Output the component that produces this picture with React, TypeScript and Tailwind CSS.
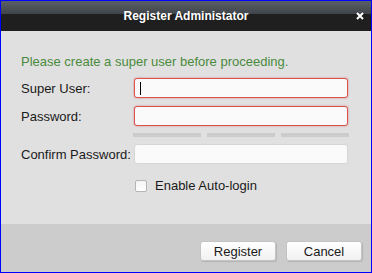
import React from 'react';

const font = { fontFamily: '"Liberation Sans", Arial, sans-serif' };

const Field: React.FC<{ label: string; error?: boolean; caret?: boolean }> = ({ label, error, caret }) => (
  <div className="flex items-center h-[20px]">
    <span className="w-[113px] text-[13px] text-[#1a1a1a] leading-none">{label}</span>
    <div
      className={
        'relative w-[214px] h-[20px] rounded-[3px] bg-[#fafafa] border ' +
        (error ? 'border-[#d9534f] shadow-[0_0_2px_rgba(217,83,79,0.7)]' : 'border-[#d6d6d6]')
      }
    >
      {caret && <span className="absolute left-[5px] top-[3px] w-px h-[13px] bg-black" />}
    </div>
  </div>
);

export default function App() {
  return (
    <div style={font} className="w-[372px] h-[273px] border border-[#0000ff] flex flex-col bg-[#e0e0e0]">
      {/* title bar */}
      <div className="relative h-[30px] flex items-center justify-center bg-[linear-gradient(#5a6067,#3e4349_45%,#1f1f1f_45%)]">
        <span className="text-white text-[12px] font-bold">Register Administator</span>
        <svg className="absolute right-[7px] top-[11px]" width="8" height="8" viewBox="0 0 8 8">
          <path d="M1 1L7 7M7 1L1 7" stroke="#fff" strokeWidth="2" />
        </svg>
      </div>

      {/* body */}
      <div className="flex-1 pl-[20px] pt-[23px]">
        <p className="text-[13px] text-[#4a8a3c] leading-[15px]">Please create a super user before proceeding.</p>
        <div className="mt-[9px] flex flex-col">
          <Field label="Super User:" error caret />
          <div className="mt-[8px]">
            <Field label="Password:" error />
          </div>
          <div className="mt-[7px] ml-[112px] flex gap-[6px]">
            <div className="w-[68px] h-[4px] bg-[#cccccc]" />
            <div className="w-[68px] h-[4px] bg-[#cccccc]" />
            <div className="w-[68px] h-[4px] bg-[#cccccc]" />
          </div>
          <div className="mt-[7px]">
            <Field label="Confirm Password:" />
          </div>
          <label className="mt-[15px] ml-[114px] flex items-center gap-[8px]">
            <span className="w-[12px] h-[12px] rounded-[2px] border border-[#b5b5b5] bg-[linear-gradient(#f4f4f4,#ffffff)]" />
            <span className="text-[13px] text-[#1a1a1a] leading-none">Enable Auto-login</span>
          </label>
        </div>
      </div>

      {/* footer */}
      <div className="h-[48px] bg-[#cccccc] flex justify-end items-start pt-[17px] pr-[9px] gap-[10px]">
        <button className="w-[76px] h-[20px] rounded-[3px] border border-[#c4c4c4] bg-[linear-gradient(#ffffff,#f1f1f1)] shadow-[1px_1px_1px_rgba(0,0,0,0.12)] text-[13px] text-[#1a1a1a] leading-none">
          Register
        </button>
        <button className="w-[76px] h-[20px] rounded-[3px] border border-[#c4c4c4] bg-[linear-gradient(#ffffff,#f1f1f1)] shadow-[1px_1px_1px_rgba(0,0,0,0.12)] text-[13px] text-[#1a1a1a] leading-none">
          Cancel
        </button>
      </div>
    </div>
  );
}
